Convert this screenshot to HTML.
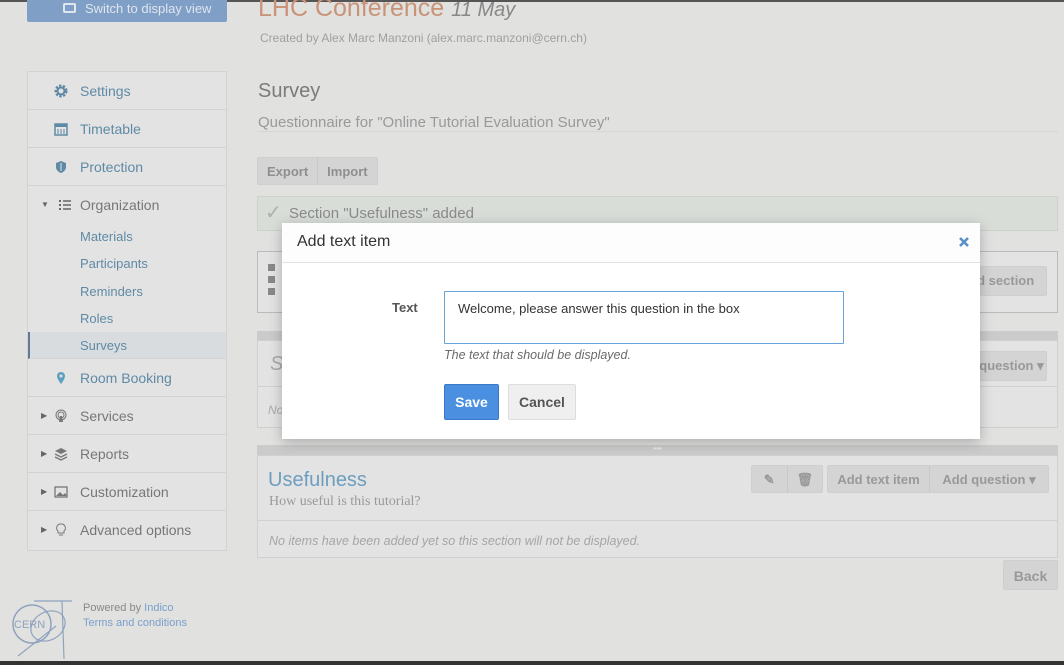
<!DOCTYPE html>
<html><head><meta charset="utf-8"><style>
*{box-sizing:border-box;margin:0;padding:0}
body{width:1064px;height:665px;overflow:hidden;background:#e1e1e0;font-family:"Liberation Sans",sans-serif;position:relative;color:#777}
.abs{position:absolute}
.topline{left:0;top:0;width:1064px;height:2px;background:#555}
.botline{left:0;top:661px;width:1064px;height:4px;background:#333}
.switch{left:27px;top:0;width:200px;height:22px;background:#7f9fc6;color:#dfe6ee;font-size:13px;line-height:17px;padding-left:58px;border-radius:0 0 2px 2px}
.title{left:258px;top:-6px;font-size:25px;color:#c99378}
.title i{color:#888;font-size:20px}
.created{left:260px;top:31px;font-size:12px;color:#a0a0a0}
.side{left:27px;top:71px;width:200px;height:480px;background:#e3e3e3;border:1px solid #d3d3d3}
.si{position:absolute;left:0;width:198px;height:38px;border-bottom:1px solid #d3d3d3;font-size:14px;color:#5f8aa5;line-height:38px;padding-left:52px}
.si svg,.si .ic{position:absolute;left:26px;top:12px}
.sub{position:absolute;left:52px;font-size:13px;color:#5f8aa5;line-height:1}
.caret{position:absolute;left:13px;font-size:8px;color:#666}
.gray{color:#777}
h2{position:absolute;left:258px;top:80px;font-size:20px;font-weight:normal;color:#7b7b7b}
.q{left:258px;top:114px;font-size:15px;color:#999;width:800px;border-bottom:1px solid #d6d6d6;height:18px}
.btng{left:257px;top:157px;height:28px;background:#d4d4d4;border:1px solid #cfcfcf;font-size:13px;font-weight:bold;color:#8f8f8f;line-height:27px;display:flex;border-radius:2px}
.btng span{padding:0 9px}
.btng span+span{border-left:1px solid #c8c8c8}
.alert{left:257px;top:196px;width:801px;height:35px;background:#d9ddd8;border:1px solid #cdd3cc;font-size:15px;color:#8a8a8a;line-height:34px;padding-left:31px}
.panel{background:#e3e3e3;border:1px solid #d0d0d0}
.bar{background:#cbcbcb;height:9px}
.overlay-btn{background:#d4d4d4;color:#999;font-size:13px;font-weight:bold;border:1px solid #cfcfcf;border-radius:2px;line-height:28px;text-align:center}
.modal{left:282px;top:223px;width:698px;height:216px;background:#fff;box-shadow:0 3px 12px rgba(0,0,0,.25)}
.mh{height:40px;border-bottom:1px solid #e2e2e2;font-size:16px;color:#333;line-height:38px;padding-left:15px;background:#fdfdfd;position:relative}
.close{position:absolute;left:677px;top:14px}
.lbl{left:110px;top:77px;font-size:13px;font-weight:bold;color:#555}
.ta{left:162px;top:68px;width:400px;height:53px;border:1px solid #66a3d9;font-size:13px;color:#333;padding:9px 13px;border-radius:1px}
.help{left:162px;top:125px;font-size:12.5px;font-style:italic;color:#6a6a6a}
.save{left:162px;top:161px;width:55px;height:36px;background:#4b8fe0;border:1px solid #3a78c4;color:#fff;font-weight:bold;font-size:14px;text-align:center;line-height:34px;border-radius:2px}
.cancel{left:226px;top:161px;width:68px;height:36px;background:#efefef;border:1px solid #ddd;color:#555;font-weight:bold;font-size:14px;text-align:center;line-height:34px;border-radius:2px}
</style></head><body>
<div class="abs topline"></div>
<div class="abs switch"><span style="position:absolute;left:36px;top:3px;width:13px;height:10px;border:2px solid #dfe6ee;border-radius:2px"></span>Switch to display view</div>
<div class="abs title">LHC Conference <i>11 May</i></div>
<div class="abs created">Created by Alex Marc Manzoni (alex.marc.manzoni@cern.ch)</div>

<div class="abs side">
 <div class="si" style="top:0"><svg width="14" height="14" viewBox="0 0 14 14"><circle cx="7" cy="7" r="5" fill="none" stroke="#5f8aa5" stroke-width="3" stroke-dasharray="2.2 1.4"/><circle cx="7" cy="7" r="3.5" fill="none" stroke="#5f8aa5" stroke-width="2"/></svg>Settings</div>
 <div class="si" style="top:38px"><svg width="14" height="14" viewBox="0 0 14 14"><rect x="1" y="2" width="12" height="11" fill="none" stroke="#5f8aa5" stroke-width="1.5"/><rect x="1" y="2" width="12" height="3" fill="#5f8aa5"/><path d="M4 7v5M7 7v5M10 7v5" stroke="#5f8aa5"/></svg>Timetable</div>
 <div class="si" style="top:76px"><svg width="14" height="14" viewBox="0 0 14 14"><path d="M7 1L2 3v4c0 3 2.5 5 5 6 2.5-1 5-3 5-6V3z" fill="#5f8aa5"/><path d="M7 3v8" stroke="#e3e3e3"/></svg>Protection</div>
 <div class="si" style="top:114px;height:146px;border-bottom:none"><span class="caret" style="top:0">▼</span><svg width="14" height="14" viewBox="0 0 14 14" style="left:30px"><path d="M1 2h2v2H1zM1 6h2v2H1zM1 10h2v2H1z" fill="#666"/><path d="M5 3h8M5 7h8M5 11h8" stroke="#666" stroke-width="1.5"/></svg><span class="gray">Organization</span>
  <span class="sub" style="top:44px">Materials</span>
  <span class="sub" style="top:71px">Participants</span>
  <span class="sub" style="top:99px">Reminders</span>
  <span class="sub" style="top:126px">Roles</span>
 </div>
 <div style="position:absolute;left:0;top:260px;width:198px;height:27px;background:#d9dcdf;border-left:2px solid #5f7a95;border-bottom:1px solid #d3d3d3"><span class="sub" style="top:7px;left:50px">Surveys</span></div>
 <div class="si" style="top:287px"><svg width="14" height="14" viewBox="0 0 14 14"><path d="M7 1a4 4 0 0 0-4 4c0 3 4 8 4 8s4-5 4-8a4 4 0 0 0-4-4z" fill="#5f9fbf"/><circle cx="7" cy="5" r="1.5" fill="#e3e3e3"/></svg>Room Booking</div>
 <div class="si gray" style="top:325px"><span class="caret">▶</span><svg width="14" height="14" viewBox="0 0 14 14"><circle cx="7" cy="6" r="5" fill="none" stroke="#777"/><circle cx="7" cy="6" r="3" fill="none" stroke="#777"/><path d="M6 7h2l1 6H5z" fill="#777"/></svg>Services</div>
 <div class="si gray" style="top:363px"><span class="caret">▶</span><svg width="14" height="14" viewBox="0 0 14 14"><path d="M7 1l6 3-6 3-6-3z" fill="#777"/><path d="M1 7l6 3 6-3M1 10l6 3 6-3" fill="none" stroke="#777" stroke-width="1.3"/></svg>Reports</div>
 <div class="si gray" style="top:401px"><span class="caret">▶</span><svg width="14" height="14" viewBox="0 0 14 14"><rect x="1" y="2" width="12" height="10" fill="none" stroke="#777" stroke-width="1.3"/><path d="M2 11l4-4 3 3 2-2 2 3z" fill="#777"/></svg>Customization</div>
 <div class="si gray" style="top:439px;border-bottom:none"><span class="caret">▶</span><svg width="14" height="14" viewBox="0 0 14 14"><path d="M7 1a4 4 0 0 0-3 7v2h6V8a4 4 0 0 0-3-7zM5 12h4" fill="none" stroke="#777"/></svg>Advanced options</div>
</div>

<h2>Survey</h2>
<div class="abs q">Questionnaire for "Online Tutorial Evaluation Survey"</div>
<div class="abs btng"><span>Export</span><span>Import</span></div>
<div class="abs alert"><span style="position:absolute;left:7px;top:-1px;color:#a8b4a8;font-size:20px">✓</span>Section "Usefulness" added</div>

<div class="abs panel" style="left:257px;top:251px;width:801px;height:62px;border-color:#bbb"><span style="position:absolute;left:10px;top:12px;width:7px;height:32px;background:repeating-linear-gradient(#888 0 7px,transparent 7px 12px)"></span><div class="overlay-btn" style="position:absolute;right:10px;top:14px;width:100px">Add section</div></div>
<div class="abs" style="left:257px;top:331px;width:801px;height:97px"><div class="bar"></div><div class="panel" style="height:88px;position:relative"><span style="position:absolute;left:12px;top:12px;font-size:20px;font-style:italic;color:#aaa">S</span><div class="overlay-btn" style="position:absolute;right:10px;top:10px;width:100px">Add question ▾</div><div style="position:absolute;left:0;top:45px;width:100%;border-top:1px solid #d0d0d0"></div><span style="position:absolute;left:10px;top:62px;font-size:12px;font-style:italic;color:#aaa">No</span></div></div>

<div class="abs" style="left:257px;top:445px;width:801px;height:113px"><div class="bar" style="height:10px;text-align:center;font-size:8px;color:#eee;line-height:8px">•••</div><div class="panel" style="height:103px;position:relative">
 <span style="position:absolute;left:10px;top:13px;font-size:20px;color:#6d9ec0">Usefulness</span>
 <span style="position:absolute;left:11px;top:38px;font-size:14px;font-family:'Liberation Serif',serif;color:#999">How useful is this tutorial?</span>
 <div class="overlay-btn" style="position:absolute;left:493px;top:9px;width:72px;height:28px;display:flex"><span style="flex:1;border-right:1px solid #c8c8c8">✎</span><span style="flex:1">🗑</span></div>
 <div class="overlay-btn" style="position:absolute;left:569px;top:9px;width:222px;height:28px;display:flex"><span style="width:102px;border-right:1px solid #c8c8c8">Add text item</span><span style="flex:1">Add question ▾</span></div>
 <div style="position:absolute;left:0;top:64px;width:100%;border-top:1px solid #d0d0d0"></div>
 <span style="position:absolute;left:11px;top:78px;font-size:12.5px;font-style:italic;color:#a5a5a5">No items have been added yet so this section will not be displayed.</span>
</div></div>
<div class="abs overlay-btn" style="left:1003px;top:560px;width:55px;height:30px;font-size:14px;line-height:30px">Back</div>

<svg class="abs" style="left:10px;top:598px" width="64" height="62" viewBox="0 0 64 62"><circle cx="22" cy="26" r="19" fill="none" stroke="#8fa3be" stroke-width="1.5"/><ellipse cx="38" cy="28" rx="18" ry="14" fill="none" stroke="#8fa3be" stroke-width="1.2" transform="rotate(-30 38 28)"/><path d="M24 3h38M52 3l2 58M8 58l38-30" stroke="#8fa3be" fill="none" stroke-width="1.2"/><text x="4" y="30" font-size="11" fill="#8fa3be" font-family="Liberation Sans">CERN</text></svg>
<div class="abs" style="left:83px;top:601px;font-size:11px;color:#888;line-height:15px">Powered by <span style="color:#7aa0cc">Indico</span><br><span style="color:#7aa0cc">Terms and conditions</span></div>

<div class="abs modal">
 <div class="mh">Add text item<svg class="close" width="10" height="10" viewBox="0 0 10 10"><path d="M1 1l8 8M9 1l-8 8" stroke="#5a8fc7" stroke-width="2.6"/></svg></div>
 <div class="abs lbl">Text</div>
 <div class="abs ta">Welcome, please answer this question in the box</div>
 <div class="abs help">The text that should be displayed.</div>
 <div class="abs save">Save</div>
 <div class="abs cancel">Cancel</div>
</div>
<div class="abs botline"></div>
</body></html>
